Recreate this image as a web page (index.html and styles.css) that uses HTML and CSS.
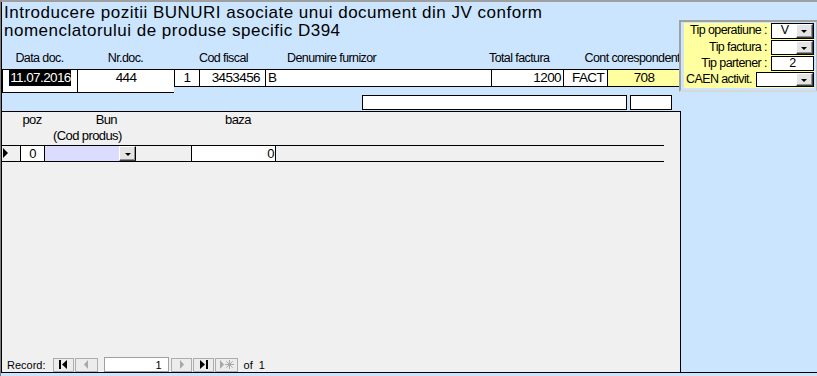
FILE: index.html
```html
<!DOCTYPE html>
<html>
<head>
  <meta charset="UTF-8">
  <title>Introducere pozitii BUNURI</title>
  <link rel="stylesheet" href="styles.css">
</head>
<body>
<div class="window">
  <div class="main">
    <div class="left">
      <h1 class="title">Introducere pozitii BUNURI asociate unui document din JV conform<br>nomenclatorului de produse specific D394</h1>

      <div class="labels">
        <span class="lbl-date">Data doc.</span>
        <span class="lbl-nr">Nr.doc.</span>
        <span class="lbl-cf">Cod fiscal</span>
        <span class="lbl-den">Denumire furnizor</span>
        <span class="lbl-tot">Total factura</span>
        <span class="lbl-cont">Cont corespondent</span>
      </div>

      <div class="fields">
        <div class="box tall center"><span class="sel-text">11.07.2016</span></div>
        <div class="box tall center">444</div>
        <div class="box center">1</div>
        <div class="box right pad-r">3453456</div>
        <div class="box left-al">B</div>
        <div class="box right">1200</div>
        <div class="box left-al pad-l">FACT</div>
        <div class="box center yellow last">708</div>
      </div>

      <div class="extra">
        <div class="box wide"></div>
        <div class="box small"></div>
      </div>

      <div class="subform">
        <div class="sub-head">
          <span class="h-poz">poz</span>
          <span class="h-bun">Bun</span>
          <span class="h-baza">baza</span>
          <span class="h-cod">(Cod produs)</span>
        </div>
        <div class="rec-row">
          <div class="c-sel"><span class="arrow"></span></div>
          <div class="c-poz">0</div>
          <div class="c-bun"></div>
          <div class="c-btn"><span class="dd-arrow"></span></div>
          <div class="c-gray"></div>
          <div class="c-baza">0</div>
        </div>

        <div class="nav">
          <span class="nav-label">Record:</span>
          <span class="nav-btn">
            <svg width="11" height="9" viewBox="0 0 11 9"><rect x="1" y="0" width="2" height="9" fill="#000"/><path d="M9 0 L4 4.5 L9 9 Z" fill="#000"/></svg>
          </span>
          <span class="nav-btn wide">
            <svg width="11" height="9" viewBox="0 0 11 9"><path d="M7 0 L3 4.5 L7 9 Z" fill="#a8a8a8"/></svg>
          </span>
          <span class="nav-input">1</span>
          <span class="nav-btn">
            <svg width="11" height="9" viewBox="0 0 11 9"><path d="M4 0 L8 4.5 L4 9 Z" fill="#a8a8a8"/></svg>
          </span>
          <span class="nav-btn">
            <svg width="11" height="9" viewBox="0 0 11 9"><path d="M2 0 L7 4.5 L2 9 Z" fill="#000"/><rect x="8" y="0" width="2" height="9" fill="#000"/></svg>
          </span>
          <span class="nav-btn wide">
            <svg width="15" height="9" viewBox="0 0 15 9"><path d="M1 0 L5 4.5 L1 9 Z" fill="#a8a8a8"/><path d="M10.5 0 V9 M6 4.5 H15 M7.3 1.3 L13.7 7.7 M13.7 1.3 L7.3 7.7" stroke="#a8a8a8" stroke-width="1"/></svg>
          </span>
          <span class="nav-of">of&nbsp; 1</span>
        </div>
      </div>
    </div>

    <div class="side">
      <div class="panel">
        <div class="p-row first">
          <span class="p-lbl">Tip operatiune :</span>
          <div class="p-box combo">V<span class="p-dd"><span class="dd-arrow"></span></span></div>
        </div>
        <div class="p-row">
          <span class="p-lbl">Tip factura :</span>
          <div class="p-box combo"><span class="p-dd"><span class="dd-arrow"></span></span></div>
        </div>
        <div class="p-row">
          <span class="p-lbl">Tip partener :</span>
          <div class="p-box plain">2</div>
        </div>
        <div class="p-row">
          <span class="p-lbl caen">CAEN activit.</span>
          <div class="p-box combo wide"><span class="p-dd"><span class="dd-arrow"></span></span></div>
        </div>
      </div>
    </div>
  </div>
</div>
</body>
</html>
```

FILE: styles.css
```css
body {
  margin: 0;
}
.window {
  width: 817px;
  height: 376px;
  box-sizing: border-box;
  background-color: #cce5ff;
  border-top: 2px solid #a0a0a0;
  border-left: 1px solid #808080;
  padding-bottom: 3px;
  font-family: "Liberation Sans", Arial, sans-serif;
  font-size: 12px;
  letter-spacing: -0.6px;
  color: #000;
}
.main {
  display: flex;
  height: 100%;
  box-sizing: border-box;
  border-bottom: 1px solid #000;
}
.left {
  width: 680px;
  border-left: 1px solid #000;
  display: flex;
  flex-direction: column;
}
.title {
  margin: 0;
  padding: 2px 0 0 2px;
  height: 38px;
  box-sizing: border-box;
  font-weight: normal;
  font-size: 17px;
  line-height: 18px;
  letter-spacing: 0.5px;
  white-space: nowrap;
}

/* header labels + fields share the same columns */
.labels, .fields {
  display: grid;
  grid-template-columns: 75px 97px 25px 66px 226px 72px 44px 74px;
}
.labels {
  margin-top: 9px;
  height: 18px;
  line-height: 18px;
  font-size: 12.5px;
  white-space: nowrap;
}
.lbl-date { grid-column: 1; text-align: center; }
.lbl-nr { grid-column: 2; text-align: center; }
.lbl-cf { grid-column: 3 / 5; text-align: center; padding-left: 8px; }
.lbl-den { grid-column: 5; padding-left: 22px; }
.lbl-tot { grid-column: 6; margin-left: -2px; }
.lbl-cont { grid-column: 7 / 9; text-align: right; padding-right: 1px; }

.fields {
  margin-top: 2px;
  align-items: start;
  font-size: 13.5px;
}
.box {
  box-sizing: border-box;
  height: 18px;
  line-height: 16px;
  background: #fff;
  border: 1px solid #000;
  border-right: none;
  white-space: nowrap;
  overflow: hidden;
}
.box.tall { height: 24px; }
.box.last { border-right: 1px solid #000; }
.center { text-align: center; }
.right { text-align: right; padding-right: 2px; }
.pad-r { padding-right: 5px; }
.left-al { padding-left: 2px; }
.pad-l { padding-left: 8px; }
.yellow { background: #ffffa0; }
.sel-text {
  background: #000;
  color: #fff;
  padding: 1px 0 1px 1px;
}

.extra {
  display: flex;
  gap: 3px;
  margin-top: 2px;
  padding-left: 360px;
}
.extra .box {
  height: 15px;
  border-right: 1px solid #000;
}
.extra .wide { width: 265px; }
.extra .small { width: 42px; }

/* subform */
.subform {
  flex: 1;
  margin-top: 1px;
  background: #f0f0f0;
  border-top: 1px solid #000;
  border-right: 1px solid #000;
  display: flex;
  flex-direction: column;
  font-size: 13px;
}
.sub-head {
  height: 33px;
  display: grid;
  grid-template-columns: 18px 24px 92px 56px 86px;
  grid-template-rows: 16px 17px;
  line-height: 16px;
  white-space: nowrap;
}
.h-poz { grid-column: 2; grid-row: 1; text-align: center; }
.h-bun { grid-column: 3; grid-row: 1; text-align: right; padding-right: 19px; }
.h-baza { grid-column: 5; grid-row: 1; padding-left: 33px; }
.h-cod { grid-column: 3; grid-row: 2; padding-left: 9px; }

.rec-row {
  width: 662px;
  height: 17px;
  box-sizing: border-box;
  border-top: 1px solid #000;
  border-bottom: 1px solid #000;
  display: flex;
  line-height: 15px;
}
.c-sel {
  width: 18px;
  border-right: 1px solid #000;
  position: relative;
}
.arrow {
  position: absolute;
  left: 1px;
  top: 2px;
  border-left: 5px solid #000;
  border-top: 5px solid transparent;
  border-bottom: 5px solid transparent;
}
.c-poz {
  width: 23px;
  border-right: 1px solid #000;
  text-align: center;
  background: #fff;
}
.c-bun {
  width: 74px;
  background: #dcdcff;
}
.c-btn, .p-dd {
  box-sizing: border-box;
  width: 17px;
  flex-shrink: 0;
  background: #e4e4e4;
  border: 1px solid;
  border-color: #fff #404040 #404040 #fff;
  box-shadow: inset -1px -1px #909090;
  display: flex;
  align-items: center;
  justify-content: center;
}
.c-btn { border-right: 1px solid #000; }
.dd-arrow {
  border-top: 3px solid #000;
  border-left: 3px solid transparent;
  border-right: 3px solid transparent;
  margin-top: 1px;
}
.c-gray {
  width: 55px;
  border-right: 1px solid #000;
}
.c-baza {
  width: 84px;
  border-right: 1px solid #000;
  background: #fff;
  text-align: right;
  padding-right: 1px;
  box-sizing: border-box;
}

/* record navigation */
.nav {
  margin-top: auto;
  height: 15px;
  display: flex;
  align-items: center;
  padding-left: 5px;
  font-size: 11px;
  letter-spacing: 0;
}
.nav-label { margin-right: 7px; }
.nav-btn {
  box-sizing: border-box;
  width: 21px;
  height: 14px;
  margin-right: 1px;
  border: 1px solid #adadad;
  background: #ececec;
  display: flex;
  align-items: center;
  justify-content: center;
}
.nav-btn.wide { width: 23px; }
.nav-input {
  box-sizing: border-box;
  width: 65px;
  height: 15px;
  margin: 0 2px 0 5px;
  border: 1px solid #a0a0a0;
  background: #fff;
  text-align: right;
  padding-right: 6px;
  line-height: 14px;
}
.nav-of { margin-left: 5px; }

/* right options panel */
.side {
  flex: 1;
}
.panel {
  margin: 18px 0 0 -2px;
  height: 72px;
  box-sizing: border-box;
  border: 2px solid #a0a0a0;
  border-right-color: #b8b8b8;
  border-bottom-color: #d8d8d8;
  padding: 1px 2px 2px 3px;
}
.p-row {
  display: flex;
  height: 16px;
  background: #ffffa0;
  line-height: 15px;
  font-size: 12.5px;
}
.p-row.first { height: 17px; }
.p-lbl {
  flex: 1;
  min-width: 0;
  text-align: right;
  padding-right: 4px;
  white-space: nowrap;
}
.p-lbl.caen {
  text-align: left;
  padding-left: 2px;
}
.p-box {
  box-sizing: border-box;
  width: 43px;
  flex-shrink: 0;
  height: calc(100% - 1px);
  border: 1px solid #000;
  background: #fff;
  display: flex;
  justify-content: center;
  line-height: 13px;
}
.p-box.combo {
  justify-content: flex-start;
  padding-left: 9px;
}
.p-box .p-dd {
  margin-left: auto;
  height: 100%;
}
.p-box.wide { width: 58px; }
```
